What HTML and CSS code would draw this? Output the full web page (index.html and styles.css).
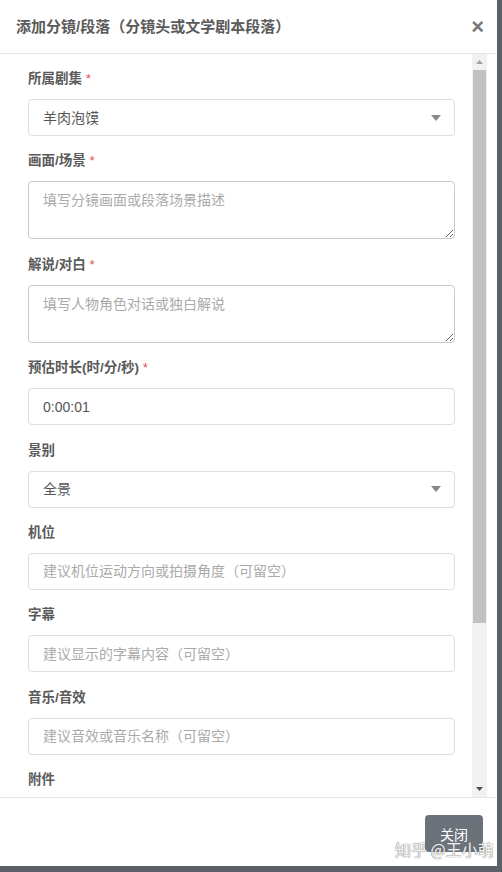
FILE: index.html
```html
<!DOCTYPE html>
<html lang="zh">
<head>
<meta charset="utf-8">
<title>添加分镜/段落</title>
<link rel="stylesheet" href="styles.css">
</head>
<body>
<div class="modal">
  <div class="modal-header">
    <h4 class="modal-title">添加分镜/段落（分镜头或文学剧本段落）</h4>
    <span class="close">×</span>
  </div>
  <div class="modal-main">
    <div class="form">
      <div class="group">
        <label class="label">所属剧集 <span class="req">*</span></label>
        <div class="control select"><span>羊肉泡馍</span><svg width="10" height="6" viewBox="0 0 10 6"><path d="M0 0H10L5 6Z" fill="#888"/></svg></div>
      </div>
      <div class="group">
        <label class="label">画面/场景 <span class="req">*</span></label>
        <textarea class="control area" placeholder="填写分镜画面或段落场景描述"></textarea>
      </div>
      <div class="group">
        <label class="label">解说/对白 <span class="req">*</span></label>
        <textarea class="control area" placeholder="填写人物角色对话或独白解说"></textarea>
      </div>
      <div class="group">
        <label class="label">预估时长(时/分/秒) <span class="req">*</span></label>
        <input class="control" type="text" value="0:00:01">
      </div>
      <div class="group">
        <label class="label">景别</label>
        <div class="control select"><span>全景</span><svg width="10" height="6" viewBox="0 0 10 6"><path d="M0 0H10L5 6Z" fill="#888"/></svg></div>
      </div>
      <div class="group">
        <label class="label">机位</label>
        <input class="control" type="text" placeholder="建议机位运动方向或拍摄角度（可留空）">
      </div>
      <div class="group">
        <label class="label">字幕</label>
        <input class="control" type="text" placeholder="建议显示的字幕内容（可留空）">
      </div>
      <div class="group">
        <label class="label">音乐/音效</label>
        <input class="control" type="text" placeholder="建议音效或音乐名称（可留空）">
      </div>
      <div class="group">
        <label class="label">附件</label>
        <input class="control" type="text">
      </div>
    </div>
    <div class="scrollbar">
      <div class="sb-btn"><svg width="7" height="4" viewBox="0 0 7 4"><path d="M0 4L3.5 0L7 4Z" fill="#a3a3a3"/></svg></div>
      <div class="sb-thumb"></div>
      <div class="sb-track"></div>
      <div class="sb-btn"><svg width="7" height="4" viewBox="0 0 7 4"><path d="M0 0H7L3.5 4Z" fill="#505050"/></svg></div>
    </div>
  </div>
  <div class="modal-footer">
    <button class="btn" type="button">关闭</button>
  </div>
  <div class="watermark">知乎 @王小萌</div>
</div>
</body>
</html>
```
FILE: styles.css
```css
* { box-sizing: border-box; }
html, body { margin: 0; padding: 0; }
body {
  background: #5c6168;
  width: 502px;
  height: 872px;
  overflow: hidden;
  font-family: "Liberation Sans", "Noto Sans CJK SC", sans-serif;
}
.modal {
  position: relative;
  width: 497px;
  height: 866px;
  background: #fff;
  display: flex;
  flex-direction: column;
}
.modal-header {
  height: 54px;
  flex: none;
  border-bottom: 1px solid #e5e5e5;
  display: flex;
  align-items: center;
  justify-content: space-between;
  padding: 0 13px 0 16px;
}
.modal-title {
  margin: 0;
  font-size: 15px;
  font-weight: bold;
  color: #5a5a5a;
  line-height: 20px;
}
.close {
  font-size: 22px;
  font-weight: bold;
  color: #777;
  line-height: 20px;
}
.modal-main {
  flex: 1;
  display: flex;
  overflow: hidden;
  min-height: 0;
}
.form {
  flex: 1;
  overflow: hidden;
  padding: 15px 17px 0 28px;
}
.group { margin-bottom: 15.4px; }
.label {
  display: block;
  font-size: 13.5px;
  font-weight: bold;
  color: #5a5a5a;
  line-height: 20px;
  margin-bottom: 10px;
}
.req { color: #d9534f; font-weight: normal; }
.control {
  display: block;
  width: 100%;
  height: 37px;
  border: 1px solid #dedede;
  border-radius: 4px;
  background: #fff;
  padding: 0 14px;
  font-family: "Liberation Sans", "Noto Sans CJK SC", sans-serif;
  font-size: 14px;
  color: #555;
  line-height: 20px;
  outline: none;
}
.control::placeholder { color: #aaa; }
.select {
  display: flex;
  align-items: center;
  justify-content: space-between;
  padding-right: 13px;
}
.area {
  height: 58px;
  padding: 8px 14px;
  border-color: #c9c9c9;
  resize: vertical;
}
.scrollbar {
  width: 15px;
  flex: none;
  margin-right: 10px;
  background: #f1f1f1;
  display: flex;
  flex-direction: column;
}
.sb-btn {
  height: 16px;
  flex: none;
  display: flex;
  align-items: center;
  justify-content: center;
}
.sb-thumb {
  height: 553px;
  flex: none;
  margin: 0 1px;
  background: #c1c1c1;
}
.sb-track { flex: 1; }
.modal-footer {
  height: 69px;
  flex: none;
  border-top: 1px solid #e5e5e5;
  display: flex;
  justify-content: flex-end;
  align-items: flex-start;
  padding: 17px 14px 0 0;
}
.btn {
  width: 58px;
  height: 37px;
  border: none;
  border-radius: 4px;
  background: #6b727a;
  color: #fff;
  font-family: "Liberation Sans", "Noto Sans CJK SC", sans-serif;
  font-size: 14px;
  padding: 0;
}
.watermark {
  position: absolute;
  left: 395px;
  top: 838px;
  font-size: 16px;
  line-height: 22px;
  color: rgba(255, 255, 255, 0.92);
  text-shadow: 0 0 1px #777, 0 0 1px #777;
  font-family: "Noto Sans CJK SC", sans-serif;
  white-space: nowrap;
}
```
